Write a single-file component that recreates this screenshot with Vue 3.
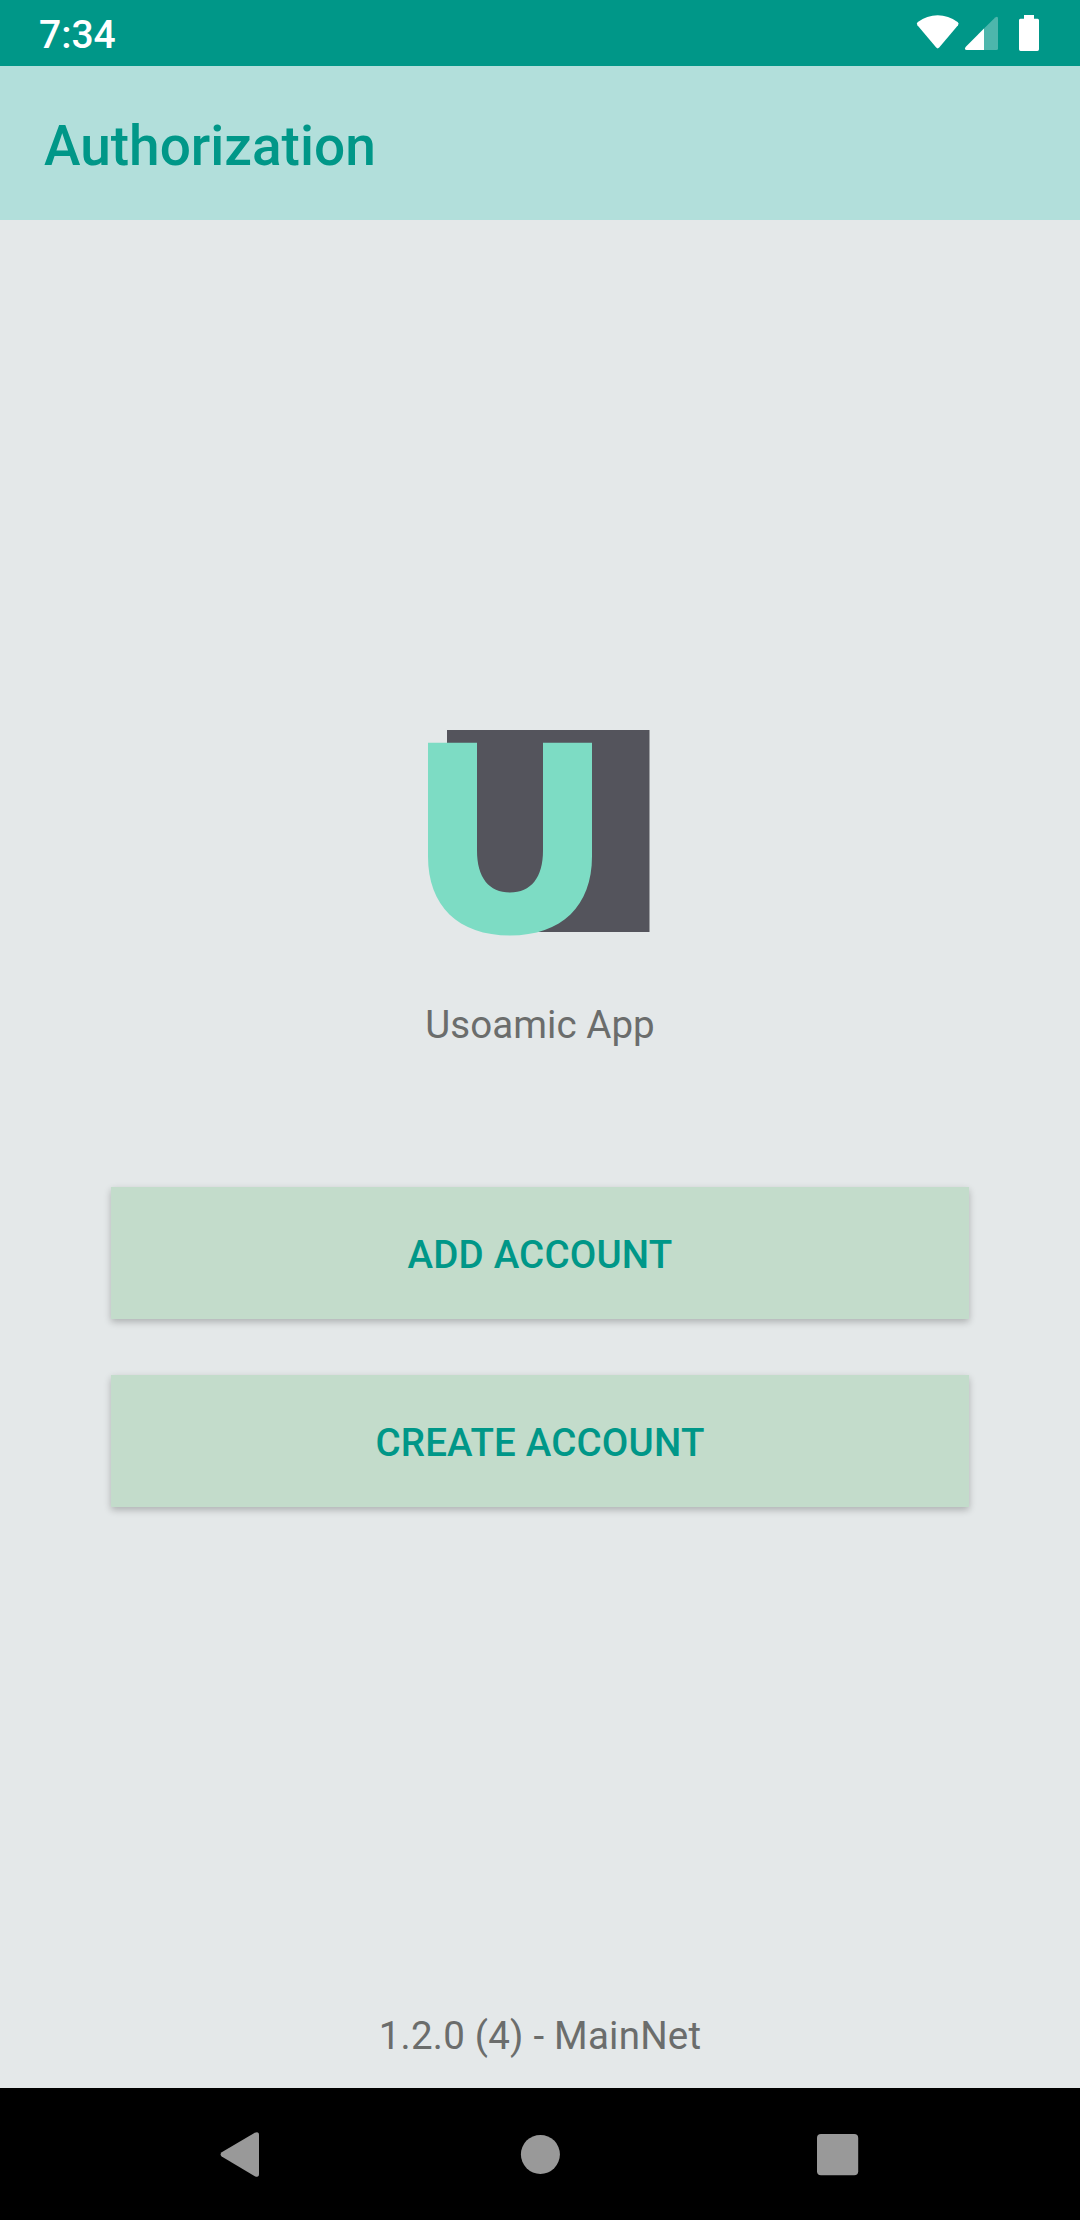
<script setup>
const title = 'Authorization'
const actions = ['Add account', 'Create account']
</script>

<template>
  <div class="screen">
    <header class="status">
      <span class="clock">7:34</span>
      <svg class="status-icons" width="124" height="38" viewBox="916 14 124 38">
        <path fill="#fff" d="M917.4 25.2Q916 23.4 917.8 22Q927 15.2 937.7 15.2T957.6 22Q959.4 23.4 958 25.2L939.2 47.6Q937.7 49.2 936.2 47.6Z" />
        <path fill="#fff" fill-opacity=".3" d="M984 28.6L995.2 17.5Q998 15.6 998 18.6V48.5Q998 50 996.5 50H984Z" />
        <path fill="#fff" d="M984 28.6V50H966.6Q963.8 49.5 965.6 47Z" />
        <path fill="#fff" d="M1024 15H1034V18.7H1037.6Q1039 18.7 1039 20.2V49.3Q1039 51 1037.4 51H1020.6Q1019 51 1019 49.3V20.2Q1019 18.7 1020.4 18.7H1024Z" />
      </svg>
    </header>
    <div class="toolbar"><h1>{{ title }}</h1></div>
    <main class="content">
      <svg class="logo" width="224" height="208" viewBox="427 728.5 224 208">
        <path fill="#54545c" d="M447 729.4H649.5V931.4H510V915L460 900L447 860Z" />
        <path fill="#7ddcc4" d="M428 742.2H477V850C477 877 489 892 510 892S543 877 543 850V742.2H592V856C592 905 562 935 510 935S428 905 428 856Z" />
      </svg>
      <p class="name">Usoamic App</p>
      <div class="actions">
        <button v-for="label in actions" :key="label" class="action" type="button">{{ label }}</button>
      </div>
      <p class="version">1.2.0 (4) - MainNet</p>
    </main>
    <nav class="navbar">
      <svg width="1080" height="132" viewBox="0 2088 1080 132" fill="#999">
        <path d="M221.7 2152.2L254.8 2132.7Q259 2131 259 2135V2174Q259 2178 254.8 2176.2L221.7 2156.6Q219.5 2154.4 221.7 2152.2Z" />
        <circle cx="540.4" cy="2154.4" r="19.5" />
        <rect x="817" y="2134" width="41.2" height="41.2" rx="4" />
      </svg>
    </nav>
  </div>
</template>

<style>
body {
  margin: 0;
}
</style>

<style scoped>
.screen {
  width: 1080px;
  height: 2220px;
  display: flex;
  flex-direction: column;
  overflow: hidden;
  background: #e4e8e9;
  font-family: Roboto, "Noto Sans", sans-serif;
}
.status {
  height: 66px;
  box-sizing: border-box;
  padding: 0 40px 0 39px;
  display: flex;
  justify-content: space-between;
  background: #009788;
}
.clock {
  padding-top: 2px;
  color: #fff;
  font-size: 39px;
  font-weight: 500;
  line-height: 66px;
}
.status-icons {
  margin-top: 14px;
}
.toolbar {
  height: 154px;
  box-sizing: border-box;
  padding: 3px 44px 0;
  background: #b2dfdb;
}
h1 {
  margin: 0;
  color: #009788;
  font-size: 55px;
  font-weight: 500;
  line-height: 154px;
}
.content {
  height: 1868px;
  display: flex;
  flex-direction: column;
  align-items: center;
}
.logo {
  flex: none;
  align-self: flex-start;
  margin: 508.5px 0 0 427px;
}
.name,
.version {
  margin: 0;
  color: #6b6d6c;
  font-size: 38.5px;
  line-height: 45px;
}
.name {
  margin-top: 65.5px;
  letter-spacing: .05px;
}
.actions {
  width: 858px;
  margin-top: 140px;
  display: flex;
  flex-direction: column;
  gap: 56px;
}
.action {
  height: 132px;
  padding: 2px 0 0;
  border: 0;
  border-radius: 0;
  background: #c3dccb;
  box-shadow: 0 3px 7px rgba(0, 0, 0, .24);
  color: #009788;
  font: 500 38.5px/45px Roboto, "Noto Sans", sans-serif;
  letter-spacing: .18px;
  text-transform: uppercase;
}
.version {
  margin-top: auto;
  margin-bottom: 30px;
  letter-spacing: .22px;
}
.navbar {
  height: 132px;
  background: #000;
}
.navbar svg {
  display: block;
}
</style>
